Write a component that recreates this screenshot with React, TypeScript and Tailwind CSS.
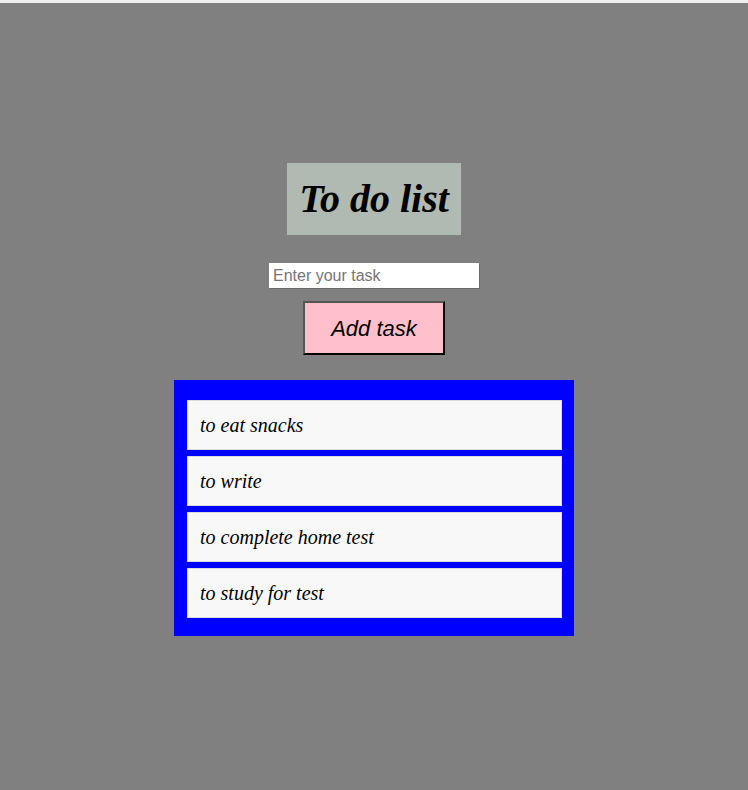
import React from "react";

export default function App() {
  const tasks = ["to eat snacks", "to write", "to complete home test", "to study for test"];
  return (
    <div className="min-h-[790px] bg-[#808080] flex flex-col">
      <div className="h-[3px] bg-[#f0f0f0]" />
      <div className="flex flex-col items-center pt-[160px]">
        <h1
          className="bg-[#b0b9b2] w-[174px] h-[72px] flex items-center justify-center text-[40px] font-bold italic text-black"
          style={{ fontFamily: '"Liberation Serif", serif' }}
        >
          To do list
        </h1>
        <input
          type="text"
          placeholder="Enter your task"
          className="mt-[28px] w-[210px] h-[25px] bg-white px-[4px] text-[16px] outline-none border-0 placeholder:text-[#757575] shadow-[1px_1px_0_#6a6a6a]"
          style={{ fontFamily: '"Liberation Sans", Arial, sans-serif' }}
        />
        <button
          className="mt-[13px] w-[142px] h-[54px] bg-[#ffc0cb] border-2 border-t-[#555] border-l-[#555] border-b-black border-r-black text-[22px] italic text-black"
          style={{ fontFamily: '"Liberation Sans", Arial, sans-serif' }}
        >
          Add task
        </button>
        <ul className="mt-[25px] w-[400px] bg-[#0000ff] pt-[20px] pb-[18px] pl-[13px] pr-[12px] flex flex-col gap-[6px]">
          {tasks.map((t) => (
            <li
              key={t}
              className="h-[50px] bg-[#f8f8f8] border border-[#dcdcdc] flex items-center pl-[12px] text-[20px] italic text-black"
              style={{ fontFamily: '"Liberation Serif", serif' }}
            >
              {t}
            </li>
          ))}
        </ul>
      </div>
    </div>
  );
}
